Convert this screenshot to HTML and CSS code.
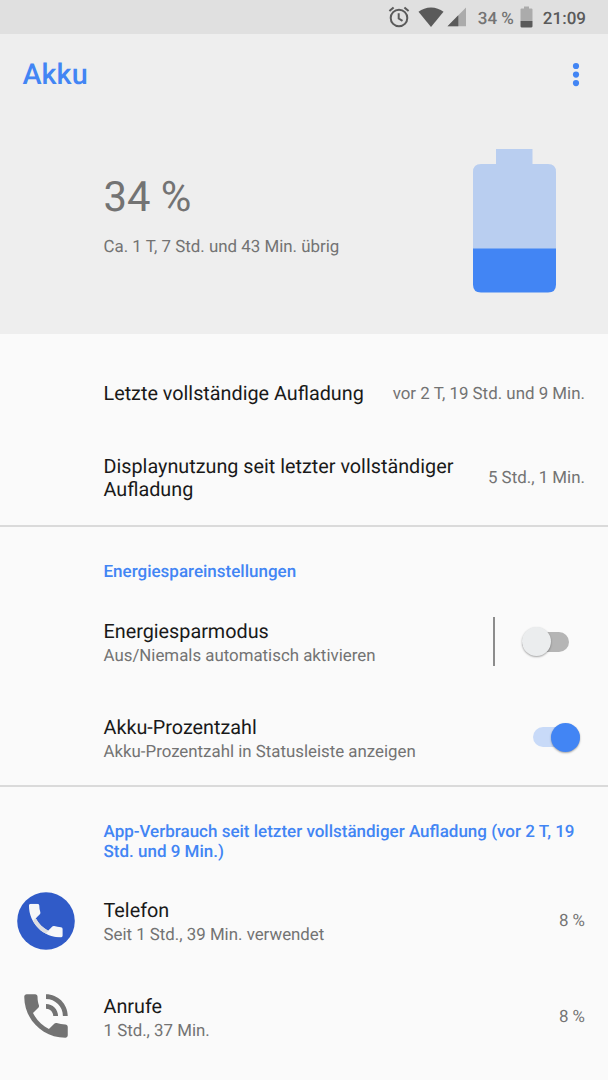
FILE: index.html
```html
<!DOCTYPE html>
<html lang="de">
<head>
    <meta charset="UTF-8">
    <meta name="viewport" content="width=device-width, initial-scale=1.0">
    <title>Akku</title>
    <link rel="stylesheet" href="styles.css">
</head>
<body>
    <div class="statusbar">
        <svg class="alarm" width="22" height="22" viewBox="0 0 22 22" fill="none" stroke="#5a5a5a" stroke-width="2">
            <circle cx="11" cy="12" r="8.3"/>
            <path d="M10.7 7.3v5.2l3.8 2.4M1.4 5.1l4.2-3.6M20.6 5.1l-4.2-3.6"/>
        </svg>
        <svg class="wifi" width="26" height="20" viewBox="0 0 26 20">
            <path d="M13 20L.5 4.7C4 2 8.2 .4 13 .4S22 2 25.5 4.7Z" fill="#5a5a5a"/>
        </svg>
        <svg class="signal" width="20" height="20" viewBox="0 0 20 20">
            <path d="M.5 19.3H19V.5Z" fill="#ababab"/>
            <path d="M.5 19.3H11.3V8.3Z" fill="#5a5a5a"/>
        </svg>
        <span class="percent">34 %</span>
        <svg class="level" width="13" height="22" viewBox="0 0 13 22">
            <path d="M4 .5h5v2h2.4q1.1 0 1.1 1.1V15H.5V3.6q0-1.1 1.1-1.1H4Z" fill="#ababab"/>
            <path d="M.5 15h12v5.3q0 1.1-1.1 1.1H1.6q-1.1 0-1.1-1.1Z" fill="#5a5a5a"/>
        </svg>
        <span class="time">21:09</span>
    </div>

    <header class="hero">
        <div class="toolbar">
            <h1>Akku</h1>
            <svg width="8" height="26" viewBox="0 0 8 26" fill="#4285f4">
                <circle cx="4" cy="4" r="3.1"/>
                <circle cx="4" cy="12.6" r="3.1"/>
                <circle cx="4" cy="21.1" r="3.1"/>
            </svg>
        </div>
        <div class="charge">
            <div>
                <div class="charge-value">34 %</div>
                <div class="charge-left">Ca. 1 T, 7 Std. und 43 Min. übrig</div>
            </div>
            <svg width="83" height="144" viewBox="0 0 83 144">
                <path d="M23 0H59.5V15H75Q83 15 83 23V100H0V23Q0 15 8 15H23Z" fill="#b9cef0"/>
                <path d="M0 99.5H83V135.5Q83 143.5 75 143.5H8Q0 143.5 0 135.5Z" fill="#4285f4"/>
            </svg>
        </div>
    </header>

    <section class="usage">
        <div class="row short">
            <div class="title">Letzte vollständige Aufladung</div>
            <div class="value">vor 2 T, 19 Std. und 9 Min.</div>
        </div>
        <div class="row">
            <div class="title">Displaynutzung seit letzter vollständiger Aufladung</div>
            <div class="value">5 Std., 1 Min.</div>
        </div>
    </section>

    <section class="saver">
        <h2>Energiespareinstellungen</h2>
        <div class="row">
            <div class="text">
                <div class="title">Energiesparmodus</div>
                <div class="summary">Aus/Niemals automatisch aktivieren</div>
            </div>
            <div class="widget">
                <div class="switch"></div>
            </div>
        </div>
        <div class="row">
            <div class="text">
                <div class="title">Akku-Prozentzahl</div>
                <div class="summary">Akku-Prozentzahl in Statusleiste anzeigen</div>
            </div>
            <div class="switch on"></div>
        </div>
    </section>

    <section class="apps">
        <h2>App-Verbrauch seit letzter vollständiger Aufladung (vor 2 T, 19 Std. und 9 Min.)</h2>
        <div class="row app">
            <svg width="58" height="58" viewBox="0 0 58 58">
                <clipPath id="handset">
                    <path d="M6.62 10.79c1.44 2.83 3.76 5.14 6.59 6.59l2.2-2.2c.27-.27.67-.36 1.02-.24 1.12.37 2.33.57 3.57.57.55 0 1 .45 1 1V20c0 .55-.45 1-1 1-9.39 0-17-7.61-17-17 0-.55.45-1 1-1h3.5c.55 0 1 .45 1 1 0 1.25.2 2.45.57 3.57.11.35.03.74-.25 1.02l-2.2 2.2z"/>
                </clipPath>
                <circle cx="29" cy="29" r="28.8" fill="#305bc8"/>
                <g transform="translate(6.3 6) scale(1.88)" clip-path="url(#handset)">
                    <path d="M0 0H24V24H0Z" fill="#f5f6f8"/>
                    <path d="M4 13.5L7.2 9.8L14 16.8L10.6 20.5Z" fill="#dcdde1"/>
                </g>
            </svg>
            <div class="text">
                <div class="title">Telefon</div>
                <div class="summary">Seit 1 Std., 39 Min. verwendet</div>
            </div>
            <div class="value">8 %</div>
        </div>
        <div class="row app">
            <svg width="58" height="58" viewBox="0 0 24 24" fill="#737373">
                <path d="M20 15.5c-1.25 0-2.45-.2-3.57-.57-.35-.11-.74-.03-1.02.24l-2.2 2.2c-2.83-1.44-5.15-3.75-6.59-6.58l2.2-2.21c.28-.27.36-.66.25-1.01C8.7 6.45 8.5 5.25 8.5 4c0-.55-.45-1-1-1H4c-.55 0-1 .45-1 1 0 9.39 7.61 17 17 17 .55 0 1-.45 1-1v-3.5c0-.55-.45-1-1-1zM19 12h2c0-4.97-4.03-9-9-9v2c3.87 0 7 3.13 7 7zm-4 0h2c0-2.76-2.24-5-5-5v2c1.66 0 3 1.34 3 3z"/>
            </svg>
            <div class="text">
                <div class="title">Anrufe</div>
                <div class="summary">1 Std., 37 Min.</div>
            </div>
            <div class="value">8 %</div>
        </div>
    </section>
</body>
</html>
```
FILE: styles.css
```css
body {
    margin: 0;
    background-color: #fafafa;
    color: #191919;
    font-family: Roboto, sans-serif;
    text-rendering: geometricPrecision;
}
svg {
    display: block;
    flex: none;
}
.statusbar {
    display: flex;
    align-items: center;
    justify-content: flex-end;
    box-sizing: border-box;
    height: 34px;
    padding-right: 22px;
    background-color: #e0e0e0;
    color: #5a5a5a;
    font-size: 17px;
    font-weight: 500;
}
.alarm {
    margin-right: 8px;
}
.wifi {
    margin-right: 3px;
}
.signal {
    margin-right: 1px;
}
.percent {
    margin: 3px 6px 0 10px;
    color: #747474;
}
.time {
    margin: 3px 0 0 10px;
}
.hero {
    height: 300px;
    background-color: #eee;
}
.toolbar {
    display: flex;
    align-items: center;
    justify-content: space-between;
    height: 82px;
    padding: 0 28px 0 22.5px;
}
h1 {
    margin: 0;
    color: #4285f4;
    font-size: 28.8px;
    font-weight: 500;
}
.charge {
    display: flex;
    justify-content: space-between;
    padding: 33px 52px 0 103.5px;
}
.charge-value {
    margin-top: 24px;
    color: #737373;
    font-size: 41.8px;
    line-height: 50px;
}
.charge-left {
    margin-top: 14px;
    color: #737373;
    font-size: 16.9px;
    line-height: 20px;
}
section {
    border-bottom: 2px solid #dadada;
}
.usage {
    padding-top: 23px;
}
.row {
    display: flex;
    align-items: center;
    justify-content: space-between;
    box-sizing: border-box;
    height: 95.5px;
    padding: 0 23px 0 103.5px;
}
.short {
    height: 73px;
}
.usage .row:last-child {
    height: 95px;
}
.text {
    padding-top: 3px;
}
.title {
    font-size: 19.8px;
    line-height: 23px;
}
.summary {
    margin-top: 3px;
    color: #737373;
    font-size: 16.85px;
    line-height: 20px;
}
.value {
    padding-top: 2px;
    color: #737373;
    font-size: 16.9px;
    line-height: 21px;
    white-space: nowrap;
}
h2 {
    margin: 0;
    padding: 35px 23px 12px 103.5px;
    color: #4285f4;
    font-size: 17px;
    font-weight: 500;
    line-height: 20px;
}
.widget {
    display: flex;
    align-items: center;
    height: 49px;
    padding: 0 16px 0 27px;
    border-left: 2px solid #8c8c8c;
}
/* pill track, the thumb is drawn by ::before */
.switch {
    display: flex;
    align-items: center;
    flex: none;
    width: 47px;
    height: 20px;
    border-radius: 10px;
    background-color: #b5b5b5;
}
.switch::before {
    content: "";
    flex: none;
    width: 29px;
    height: 29px;
    border-radius: 50%;
    background-color: #ebedee;
    box-shadow: 0 1px 2px rgba(0, 0, 0, 0.35);
}
.switch.on {
    justify-content: flex-end;
    margin-right: 5px;
    background-color: #c8daf8;
}
.switch.on::before {
    background-color: #4285f4;
}
.apps {
    border-bottom: none;
}
.apps h2 {
    padding-bottom: 11px;
}
.app {
    padding-left: 17px;
}
.app svg {
    margin-right: 28.5px;
}
.app .value {
    margin-left: auto;
}
```
